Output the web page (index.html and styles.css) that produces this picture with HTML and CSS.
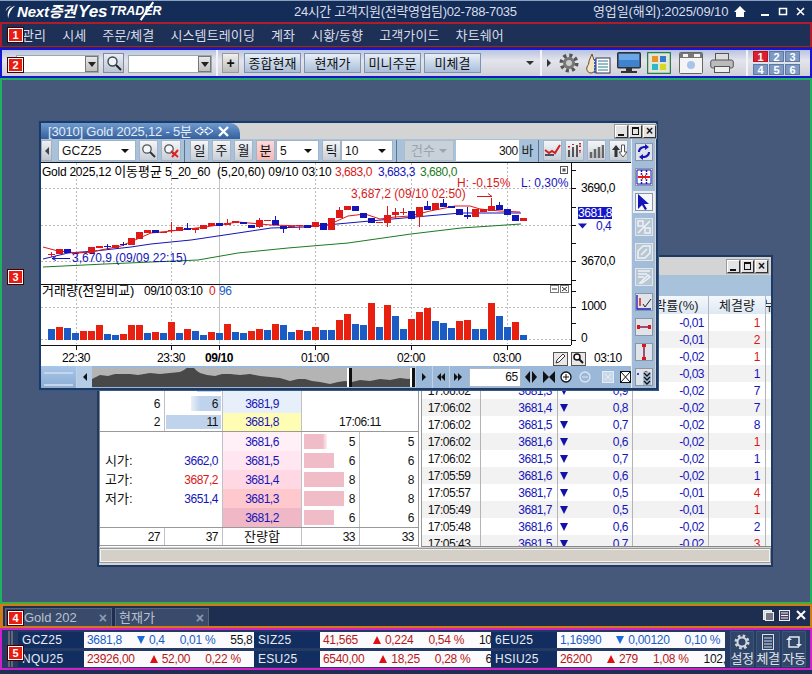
FILE: index.html
```html
<!DOCTYPE html>
<html lang="ko">
<head>
<meta charset="utf-8">
<title>Next증권 Yes TRADER</title>
<link rel="stylesheet" href="styles.css">
</head>
<body>
<div class="app">
  <header class="titlebar">
    <div class="logo">
      <svg class="swoosh" width="11" height="18" viewBox="0 0 14 18"><path d="M13 1C6 3 2 8 4 17 5 10 8 5 13 1z" fill="#fff"/><path d="M8 1C4 2 1 4 1 8 3 5 5 3 8 1z" fill="#cfd8e8"/></svg>
      <span class="logo-a">Next증권</span><span class="logo-b">Yes</span><span class="logo-c">TRADER</span>
    </div>
    <div class="title-center">24시간 고객지원(전략영업팀)02-788-7035</div>
    <div class="title-date">영업일(해외):2025/09/10</div>
    <svg class="title-icons" width="72" height="12" viewBox="0 0 72 12"><path d="M0 6 6 0l6 6h-2v5H2V6z" fill="#fff"/><path d="M27 8h8v2h-8z" fill="#fff"/><rect x="45.500" y="2.500" width="7" height="6" fill="none" stroke="#fff" stroke-width="1.500"/><path d="M63 2l7 7M70 2l-7 7" stroke="#fff" stroke-width="1.600"/></svg>
  </header>

  <nav class="menubar">
    <span>관리</span><span>시세</span><span>주문/체결</span><span>시스템트레이딩</span><span>계좌</span><span>시황/동향</span><span>고객가이드</span><span>차트쉐어</span>
  </nav>

  <div class="toolbar">
    <div class="combo combo-a"><i class="drop"></i></div>
    <button class="tb-sq"><svg width="16" height="16" viewBox="0 0 16 16"><circle cx="6.500" cy="6.500" r="4.500" fill="#eef3fa" stroke="#444" stroke-width="1.400"/><path d="M10 10l5 5" stroke="#222" stroke-width="2"/></svg></button>
    <div class="combo combo-b"><i class="drop"></i></div>
    <i class="tb-sep"></i>
    <button class="tb-plus">+</button>
    <button class="tb-btn">종합현재</button>
    <button class="tb-btn">현재가</button>
    <button class="tb-btn">미니주문</button>
    <button class="tb-btn">미체결</button>
    <i class="tb-down"></i>
    <i class="tb-sep tb-sep2"></i>
    <i class="tb-right"></i>
    <svg class="tb-ic ic-gear" width="20" height="20" viewBox="0 0 20 20"><circle cx="10" cy="10" r="7.500" fill="none" stroke="#555" stroke-width="4" stroke-dasharray="3 2.900"/><circle cx="10" cy="10" r="6" fill="#777"/><circle cx="10" cy="10" r="3" fill="#ccc"/></svg>
    <svg class="tb-ic ic-note" width="25" height="21" viewBox="0 0 25 21"><path d="M6 1l2 6c3 2 2 5 1 7 1 3-1 6-4 6s-5-3-4-6c1-2 2-3 2-6z" fill="#f2e4c8" stroke="#6b4a20"/><rect x="10" y="5" width="14" height="15" fill="#fff" stroke="#335"/><path d="M12 8h10M12 11h10M12 14h10M12 17h10" stroke="#2d7a8a"/><path d="M9 6v14" stroke="#2a5fc0" stroke-width="2" stroke-dasharray="2 1"/></svg>
    <svg class="tb-ic ic-mon" width="24" height="22" viewBox="0 0 24 22"><rect x="0.700" y="0.700" width="22.600" height="15" rx="1" fill="#3f83d0" stroke="#333" stroke-width="1.400"/><path d="M2 2h20v6H2z" fill="#6ba6e6"/><path d="M9 16h6v3H9zM4 19h16v2H4z" fill="#333"/></svg>
    <svg class="tb-ic ic-grid" width="24" height="22" viewBox="0 0 24 22"><rect x="0.500" y="0.500" width="23" height="21" rx="1" fill="#dfe8d8" stroke="#2d7a4f" stroke-width="1.500"/><rect x="5" y="4" width="6" height="6" fill="#e8932a"/><rect x="13" y="4" width="6" height="6" fill="#3a78c8"/><rect x="5" y="12" width="6" height="6" fill="#30b8c8"/><rect x="13" y="12" width="6" height="6" fill="#d8d820"/></svg>
    <svg class="tb-ic ic-cam" width="24" height="22" viewBox="0 0 24 22"><rect x="0.500" y="0.500" width="23" height="21" rx="1" fill="#f4f4f4" stroke="#666"/><path d="M1 1h22v5H1z" fill="#777"/><path d="M4 2h5v3H4zM15 2h6v3h-6z" fill="#f4f4f4"/><circle cx="12" cy="13" r="4" fill="#a8c4e8"/></svg>
    <svg class="tb-ic ic-prn" width="24" height="20" viewBox="0 0 24 20"><rect x="5.500" y="0.500" width="13" height="7" fill="#ddd" stroke="#555"/><rect x="0.700" y="7" width="22.600" height="8" rx="2" fill="#bbb" stroke="#555"/><rect x="4.500" y="13.500" width="15" height="6" fill="#eee" stroke="#555"/></svg>
    <i class="tb-sep tb-sep3"></i>
    <div class="pager">
      <span class="on">1</span><span>2</span><span>3</span><span>4</span><span>5</span><span>6</span>
    </div>
  </div>

  <main class="workspace">

    <section class="win back">
      <div class="win-title">
        <span class="wb wb-min"></span><span class="wb wb-max"></span><span class="wb wb-x"></span>
      </div>
      <div class="back-band"></div>
      <div class="back-body">
        <div class="book">
          <div class="book-head"></div>
          <div class="brow"><b></b><b class="qty"><u class="askbar" style="width:20px"></u></b><b class="px a2"></b><b class="wide"></b></div>
          <div class="brow"><b></b><b class="qty"><u class="askbar" style="width:24px"></u></b><b class="px a2"></b><b class="wide"></b></div>
          <div class="brow"><b></b><b class="qty"><u class="askbar" style="width:15px"></u></b><b class="px a2"></b><b class="wide"></b></div>
          <div class="brow"><b></b><b class="qty"><u class="askbar" style="width:24px"></u></b><b class="px a2"></b><b class="wide"></b></div>
          <div class="brow"><b class="num">6</b><b class="num qty"><u class="askbar fade" style="width:30px"></u>6</b><b class="num px a2">3681,9</b><b class="wide"></b></div>
          <div class="brow last-ask"><b class="num">2</b><b class="num qty"><u class="askbar" style="width:55px"></u>11</b><b class="num px cur">3681,8</b><b class="wide num center">17:06:11</b></div>
          <div class="brow bid"><b></b><b></b><b class="num px b1">3681,6</b><b class="num qty"><u class="bidbar fade-r" style="width:23px"></u>5</b><b class="num">5</b></div>
          <div class="brow bid"><b class="lab">시가:</b><b class="num blue">3662,0</b><b class="num px b2">3681,5</b><b class="num qty"><u class="bidbar" style="width:30px"></u>6</b><b class="num">6</b></div>
          <div class="brow bid"><b class="lab">고가:</b><b class="num red">3687,2</b><b class="num px b3">3681,4</b><b class="num qty"><u class="bidbar" style="width:40px"></u>8</b><b class="num">8</b></div>
          <div class="brow bid"><b class="lab">저가:</b><b class="num blue">3651,4</b><b class="num px b4">3681,3</b><b class="num qty"><u class="bidbar" style="width:40px"></u>8</b><b class="num">8</b></div>
          <div class="brow bid"><b></b><b></b><b class="num px b5">3681,2</b><b class="num qty"><u class="bidbar" style="width:30px"></u>6</b><b class="num">6</b></div>
          <div class="brow total"><b class="num">27</b><b class="num">37</b><b class="center">잔량합</b><b class="num">33</b><b class="num">33</b></div>
        </div>
        <div class="tape">
          <div class="thead"><b></b><b></b><b></b><b>등락률(%)</b><b>체결량</b><b>누</b></div>
          <div class="trow"><b></b><b></b><b></b><b>-0,01</b><b class="red">1</b></div>
          <div class="trow"><b></b><b></b><b></b><b>-0,01</b><b class="red">2</b></div>
          <div class="trow"><b></b><b></b><b></b><b>-0,02</b><b class="red">1</b></div>
          <div class="trow"><b></b><b></b><b></b><b>-0,03</b><b class="blue">1</b></div>
          <div class="trow"><b>17:06:02</b><b>3681,3</b><b><i class="dn"></i>0,9</b><b>-0,02</b><b class="blue">7</b></div>
          <div class="trow"><b>17:06:02</b><b>3681,4</b><b><i class="dn"></i>0,8</b><b>-0,02</b><b class="blue">7</b></div>
          <div class="trow"><b>17:06:02</b><b>3681,5</b><b><i class="dn"></i>0,7</b><b>-0,02</b><b class="blue">8</b></div>
          <div class="trow"><b>17:06:02</b><b>3681,6</b><b><i class="dn"></i>0,6</b><b>-0,02</b><b class="red">1</b></div>
          <div class="trow"><b>17:06:02</b><b>3681,5</b><b><i class="dn"></i>0,7</b><b>-0,02</b><b class="blue">1</b></div>
          <div class="trow"><b>17:05:59</b><b>3681,6</b><b><i class="dn"></i>0,6</b><b>-0,02</b><b class="blue">1</b></div>
          <div class="trow"><b>17:05:57</b><b>3681,7</b><b><i class="dn"></i>0,5</b><b>-0,01</b><b class="red">4</b></div>
          <div class="trow"><b>17:05:49</b><b>3681,7</b><b><i class="dn"></i>0,5</b><b>-0,01</b><b class="red">1</b></div>
          <div class="trow"><b>17:05:48</b><b>3681,6</b><b><i class="dn"></i>0,6</b><b>-0,02</b><b class="blue">2</b></div>
          <div class="trow"><b>17:05:43</b><b>3681,5</b><b><i class="dn"></i>0,7</b><b>-0,02</b><b class="red">3</b></div>
        </div>
      </div>
      <div class="hscroll"></div>
    </section>

    <section class="win chart">
      <div class="win-title">
        <div class="chart-tab">
          <span>[3010] Gold 2025,12 - 5분</span>
          <svg width="20" height="10" viewBox="0 0 20 10"><path d="M7 1 1 5l6 4V6.500h2v-3H7zM13 1l6 4-6 4V6.500h-2v-3h2z" fill="none" stroke="#fff"/></svg>
          <svg width="11" height="11" viewBox="0 0 11 11"><path d="M1 1l9 9M10 1l-9 9" stroke="#fff" stroke-width="2.400"/></svg>
        </div>
        <span class="wb wb-min"></span><span class="wb wb-max"></span><span class="wb wb-x"></span>
      </div>
      <div class="chart-body">
        <div class="chart-main">
          <div class="ctools">
            <button class="ct-arrow"><i class="tri-l"></i></button>
            <div class="ct-sel ct-code"><span>GCZ25</span><i class="ct-caret"></i></div>
            <button class="ct-b"><svg width="15" height="15" viewBox="0 0 15 15"><circle cx="6" cy="6" r="4.200" fill="#f4f7fb" stroke="#555" stroke-width="1.300"/><path d="M9 9l5 5" stroke="#333" stroke-width="2"/></svg></button>
            <button class="ct-b ct-w20"><svg width="16" height="15" viewBox="0 0 16 15"><circle cx="6" cy="6" r="4.200" fill="#f4f7fb" stroke="#555" stroke-width="1.300"/><path d="M9 9l2 2" stroke="#333" stroke-width="2"/><path d="M8 8l7 6M15 7l-6 7" stroke="#e02020" stroke-width="2"/></svg></button>
            <i class="ct-sep"></i>
            <button class="ct-b">일</button>
            <button class="ct-b">주</button>
            <button class="ct-b">월</button>
            <button class="ct-b ct-on">분</button>
            <div class="ct-sel ct-5"><span>5</span><i class="ct-caret"></i></div>
            <button class="ct-b ct-tick">틱</button>
            <div class="ct-sel ct-10"><span>10</span><i class="ct-caret"></i></div>
            <i class="ct-sep"></i>
            <div class="ct-dis"><span>건수</span><i class="ct-caret"></i></div>
            <div class="ct-num">300</div>
            <div class="ct-bar">바</div>
            <i class="ct-sep ct-sep-a"></i>
            <button class="ct-b"><svg width="17" height="13" viewBox="0 0 17 13"><path d="M1 6l4 3 3-2 3 2 5-8" fill="none" stroke="#d02020" stroke-width="2"/><path d="M1 11h9" stroke="#223" stroke-width="1.500"/></svg></button>
            <button class="ct-b"><svg width="15" height="15" viewBox="0 0 15 15"><path d="M2 7v7M6 4v10M10 2v12" stroke="#555" stroke-width="2"/><path d="M13 0v5M2 3v2M6 1v1M13 7v3" stroke="#d02020" stroke-width="2" stroke-dasharray="1.500 1"/></svg></button>
            <button class="ct-b"><svg width="15" height="14" viewBox="0 0 15 14"><path d="M2 8v6M6 5v9M10 3v11M14 1v13" stroke="#666" stroke-width="2.500"/></svg></button>
            <button class="ct-b"><svg width="16" height="14" viewBox="0 0 16 14"><path d="M5 1 1 6h2.500v7h3V6H9z" fill="#333"/><path d="M12 13l4-5h-2.500V1h-3v7H8z" fill="#fff" stroke="#555"/></svg></button>
          </div>

          <svg class="plot" width="590" height="203" viewBox="41 163 590 203">
            <rect x="41" y="163" width="590" height="203" fill="#fff"/>
            <g stroke="#bbb" stroke-dasharray="2 2" fill="none">
              <path d="M41 188.500H571M41 225.500H571M41 261.500H571M41 307.500H571M41 339.500H571"/>
              <path d="M76.500 163V344M171.500 163V344M315.500 163V344M411.500 163V344M507.500 163V344"/>
            </g>
            <path d="M219.500 163V344" stroke="#c4c4c4"/>
            <path d="M43 267 105 264 198 260 238 253 288 248 348 243 411 234 461 228 521 224" fill="none" stroke="#1a7a22"/>
            <path d="M43 259 68 253 95 251 131 247 151 244 191 240 238 233 271 228 305 227 348 223 381 220 415 217 461 213 521 213" fill="none" stroke="#1414b8"/>
            <path d="M43 247 58 251 78 253 91 252 121 246 135 240 151 233 171 231 205 227 238 222 271 225 305 226 328 225 348 216 365 214 380 219 395 217 410 216 430 211 455 206 470 206 480 209 500 211 520 212" fill="none" stroke="#e01818"/>
            <path d="M51.500 252v5M171.500 222v11M195.500 228v5M227.500 219v6M259.500 218v10M299.500 225v5M339.500 207v11M387.500 206v21M395.500 208v11M403.500 208v7M419.500 207v20M491.500 198v8" stroke="#e01818" fill="none"/>
            <path d="M107.500 244v5M123.500 242v4M187.500 223v5M275.500 216v4M283.500 229v4M427.500 201v5M443.500 199v4M467.500 207v12M499.500 202v3" stroke="#1414b8" fill="none"/>
            <path fill="#e01818" d="M48 254h7v1h-7zM56 249h7v5h-7zM72 253h7v1h-7zM80 252h7v1h-7zM88 247h7v6h-7zM96 246h7v2h-7zM112 245h7v3h-7zM128 238h7v7h-7zM136 232h7v7h-7zM144 230h7v3h-7zM160 232h7v1h-7zM168 230h7v1h-7zM176 227h7v4h-7zM192 228h7v2h-7zM200 225h7v4h-7zM208 223h7v3h-7zM224 223h7v2h-7zM232 221h7v2h-7zM256 220h7v7h-7zM264 220h7v1h-7zM288 226h7v1h-7zM296 225h7v1h-7zM312 222h7v5h-7zM328 218h7v12h-7zM336 210h7v8h-7zM344 206h7v4h-7zM376 222h7v1h-7zM384 215h7v8h-7zM392 212h7v3h-7zM400 212h7v1h-7zM416 207h7v10h-7zM432 203h7v7h-7zM472 209h7v8h-7zM480 209h7v3h-7zM488 206h7v5h-7zM520 218h7v3h-7z"/>
            <path fill="#1414b8" d="M64 249h7v4h-7zM104 246h7v1h-7zM120 244h7v1h-7zM152 230h7v3h-7zM184 228h7v2h-7zM216 223h7v3h-7zM240 222h7v2h-7zM248 225h7v3h-7zM272 220h7v5h-7zM280 226h7v3h-7zM304 225h7v3h-7zM320 223h7v7h-7zM352 206h7v5h-7zM360 213h7v5h-7zM368 218h7v5h-7zM408 211h7v8h-7zM424 206h7v4h-7zM440 203h7v4h-7zM448 206h7v2h-7zM456 209h7v6h-7zM464 215h7v2h-7zM496 205h7v5h-7zM504 209h7v6h-7zM512 215h7v6h-7z"/>

            <text class="t t1" x="42" y="176">Gold 2025,12 <tspan class="h">이동평균</tspan> 5_20_60</text>
            <text class="t t0" x="217" y="176">(5,20,60) 09/10 03:10</text>
            <text class="t" x="335" y="176" fill="#d81818">3,683,0</text>
            <text class="t" x="378" y="176" fill="#1414b8">3,683,3</text>
            <text class="t" x="420" y="176" fill="#1a7a22">3,680,0</text>
            <text class="t t0" x="457" y="187" fill="#d81818">H: -0,15%</text>
            <text class="t t0" x="521" y="187" fill="#1414b8">L: 0,30%</text>
            <text class="t t0" x="351" y="198" fill="#d81818">3,687,2 (09/10 02:50)</text>
            <path d="M477 196.500h15l-4-3" fill="none" stroke="#d81818"/>
            <path d="M70 258.500H52l4-2M52 258.500l4 2" fill="none" stroke="#1414b8"/>
            <text class="t t0" x="72" y="262" fill="#1414b8">3,670,9 (09/09 22:15)</text>
            <rect x="560.500" y="166.500" width="7" height="7" fill="#fff" stroke="#555"/><rect x="562.500" y="168.500" width="3" height="3" fill="#555"/>

            <path d="M41 284.500H571M41 345.500H571M571.500 163V345" stroke="#111" fill="none"/>
            <path d="M571 170.500h5M571 188.500h5M571 207.500h5M571 225.500h5M571 243.500h5M571 261.500h5M571 280.500h5M571 291.500h5M571 307.500h5M571 323.500h5M571 340.500h5M76.500 345v5M171.500 345v5M219.500 345v5M315.500 345v5M411.500 345v5M507.500 345v5" stroke="#111" fill="none"/>
            <text class="t" x="581" y="192">3690,0</text>
            <text class="t" x="581" y="265">3670,0</text>
            <rect x="578" y="207" width="34" height="12" fill="#1414c8"/>
            <text class="t" x="578" y="217" fill="#fff">3681,8</text>
            <path d="M578 223.500h9l-4.500 5z" fill="#1414b8"/>
            <text class="t" x="596" y="230" fill="#1414b8">0,4</text>
            <text class="t" x="581" y="310">1000</text>
            <text class="t" x="581" y="342">0</text>

            <text class="t h" x="42" y="295">거래량(전일비교)</text>
            <text class="t" x="144" y="295">09/10 03:10</text>
            <text class="t" x="209" y="295" fill="#d81818">0</text>
            <text class="t" x="219" y="295" fill="#1a5fc0">96</text>
            <rect x="550.500" y="285.500" width="8" height="7" fill="#fff" stroke="#777"/><path d="M552 289h5" stroke="#333"/>
            <rect x="560.500" y="285.500" width="8" height="7" fill="#fff" stroke="#777"/><path d="M562 287l5 4M567 287l-5 4" stroke="#333"/>

            <path fill="#e8200f" d="M56 340v-13h7v13zM80 340v-9h7v9zM88 340v-9h7v9zM96 340v-15h7v15zM120 340v-6h7v6zM128 340v-15h7v15zM136 340v-15h7v15zM152 340v-8h7v8zM168 340v-18h7v18zM184 340v-11h7v11zM208 340v-8h7v8zM224 340v-16h7v16zM248 340v-9h7v9zM256 340v-11h7v11zM272 340v-16h7v16zM296 340v-10h7v10zM312 340v-13h7v13zM336 340v-20h7v20zM344 340v-26h7v26zM368 340v-37h7v37zM384 340v-35h7v35zM408 340v-21h7v21zM416 340v-28h7v28zM424 340v-32h7v32zM456 340v-19h7v19zM464 340v-20h7v20zM488 340v-37h7v37zM512 340v-18h7v18z"/>
            <path fill="#1a5cc4" d="M48 340v-11h7v11zM64 340v-12h7v12zM72 340v-7h7v7zM104 340v-6h7v6zM112 340v-5h7v5zM144 340v-7h7v7zM160 340v-7h7v7zM176 340v-7h7v7zM192 340v-9h7v9zM200 340v-5h7v5zM216 340v-7h7v7zM232 340v-8h7v8zM240 340v-7h7v7zM264 340v-10h7v10zM280 340v-15h7v15zM288 340v-8h7v8zM304 340v-9h7v9zM320 340v-10h7v10zM328 340v-10h7v10zM352 340v-16h7v16zM360 340v-15h7v15zM376 340v-13h7v13zM392 340v-24h7v24zM400 340v-11h7v11zM432 340v-19h7v19zM440 340v-17h7v17zM448 340v-12h7v12zM472 340v-11h7v11zM480 340v-11h7v11zM496 340v-24h7v24zM504 340v-13h7v13zM520 340v-5h7v5z"/>

            <text class="t tm" x="76" y="362">22:30</text>
            <text class="t tm" x="171" y="362">23:30</text>
            <text class="t tm tb" x="219" y="362">09/10</text>
            <text class="t tm" x="315" y="362">01:00</text>
            <text class="t tm" x="411" y="362">02:00</text>
            <text class="t tm" x="507" y="362">03:00</text>
            <text class="t" x="594" y="362">03:10</text>
            <rect x="553.500" y="352.500" width="14" height="13" fill="#e8e8e8" stroke="#555"/><path d="M556 363l1-3 6-6 2 2-6 6z" fill="#fff" stroke="#333"/>
            <rect x="571.500" y="352.500" width="14" height="13" fill="#e8e8e8" stroke="#555"/><circle cx="577" cy="357" r="3" fill="#fff" stroke="#111" stroke-width="1.500"/><path d="M579 359l4 4" stroke="#111" stroke-width="2"/>
          </svg>

          <div class="cnav">
            <div class="nav-grip"></div>
            <button class="nav-btn nav-l"><i class="tri-l dark"></i></button>
            <svg class="overview" width="323" height="19" viewBox="92 368 323 19"><rect x="92" y="368" width="323" height="19" fill="#b4b4b4"/><path d="M92 379 96 377 100 375 108 376 115 374 130 374 138 375 150 373 160 374 170 373 180 372 184 370 188 367 194 368 197 371 200 373 207 375 215 376 222 374 230 374 240 375 250 374 260 376 270 377 280 378 290 381 298 379 305 379 312 381 320 382 330 384 338 382 345 381 352 382 360 380 370 381 380 379 390 380 400 378 408 379 415 378V387H92z" fill="#484848"/><path d="M349 368h3v19h-3zM412 368h3v19h-3z" fill="#111"/><path d="M347 368h2v19h-2zM410 368h2v19h-2z" fill="#fff"/></svg>
            <button class="nav-btn"><i class="tri-r dark"></i></button>
            <button class="nav-btn"><i class="tri-l dark"></i><i class="tri-l dark"></i></button>
            <button class="nav-btn"><i class="tri-r dark"></i><i class="tri-r dark"></i></button>
            <div class="nav-num">65</div>
            <svg class="nav-tools" width="106" height="14" viewBox="0 0 106 14"><path d="M5 1v12L0 7zM7 1v12l5-6z" fill="#111"/><path d="M18 1v12l6-6zM30 1v12l-6-6z" fill="#111"/><circle cx="41" cy="7" r="5" fill="#fff" stroke="#111" stroke-width="1.300"/><path d="M38 7h6M41 4v6" stroke="#111"/><circle cx="60" cy="7" r="5" fill="none" stroke="#dbe6f2" stroke-width="1.300"/><path d="M57 7h6" stroke="#dbe6f2"/><rect x="77.500" y="1.500" width="11" height="11" fill="#c8d8ea" stroke="#e4ecf4"/><path d="M80 4l6 6M86 4l-6 6" stroke="#e4ecf4"/><rect x="95.500" y="1.500" width="10" height="11" fill="#fff" stroke="#111"/><path d="M96 2l9 10M105 2l-9 10" stroke="#111"/></svg>
          </div>
        </div>

        <aside class="cside">
          <button class="sb"><svg width="16" height="16" viewBox="0 0 16 16"><path d="M2 8C2 4 5 2 9 2V0l4 3-4 3V4C6 4 4 6 4 8z" fill="#1414b8"/><path d="M14 8c0 4-3 6-7 6v2l-4-3 4-3v2c3 0 5-2 5-4z" fill="#1414b8"/></svg></button>
          <button class="sb"><svg width="16" height="16" viewBox="0 0 16 16"><path d="M1 1h14v14H1z" fill="#fff" stroke="#1414b8"/><path d="M5.500 1v14M10.500 1v14" stroke="#1414b8" stroke-width="1.500" stroke-dasharray="2 1"/><path d="M2 8h12" stroke="#e01818" stroke-width="2"/><path d="M5 5l3 3-3 3M11 5 8 8l3 3" fill="none" stroke="#e01818"/></svg></button>
          <button class="sb sb-on"><svg width="13" height="16" viewBox="0 0 13 16"><path d="M1 0v15l4-4 3 5 2-1-3-5h5z" fill="#1414b8"/></svg></button>
          <button class="sb sb-off"><svg width="14" height="14" viewBox="0 0 14 14"><path d="M1 13 13 1M1 1h5v5H1zM8 8h5v5H8z" fill="none" stroke="#eef2f6" stroke-width="1.500"/></svg></button>
          <button class="sb sb-off"><svg width="14" height="14" viewBox="0 0 14 14"><path d="M1 13V6l5-5h7v7l-5 5zM4 10l6-6" fill="none" stroke="#eef2f6" stroke-width="1.500"/></svg></button>
          <button class="sb sb-off"><svg width="14" height="14" viewBox="0 0 14 14"><path d="M1 1h12M1 4h9M1 7h6M3 13l8-8 2 2-8 6z" fill="none" stroke="#eef2f6" stroke-width="1.500"/></svg></button>
          <button class="sb"><svg width="16" height="16" viewBox="0 0 16 16"><path d="M1 1v14h14" fill="none" stroke="#1414b8" stroke-width="1.300"/><path d="M4 4v8" stroke="#e01818" stroke-width="1.500"/><path d="M7 10l2 3 6-8" fill="none" stroke="#222"/></svg></button>
          <button class="sb"><svg width="16" height="8" viewBox="0 0 16 8"><path d="M2 4h12" stroke="#1414b8"/><path d="M1 2h3v4H1zM12 2h3v4h-3zM4 3.500h8v1H4z" fill="#d81818"/></svg></button>
          <button class="sb"><svg width="8" height="16" viewBox="0 0 8 16"><path d="M4 1v14" stroke="#1414b8"/><path d="M2 0h4v3H2zM2 13h4v3H2zM3.500 3h1v10h-1z" fill="#d81818"/></svg></button>
          <button class="sb"><svg width="16" height="16" viewBox="0 0 16 16"><circle cx="10" cy="4" r="2" fill="#d81818"/><circle cx="2" cy="5" r="1" fill="#1414b8"/></svg></button>
          <svg class="chev" width="8" height="13" viewBox="0 0 8 13"><path d="M1 1l3 3 3-3M1 5l3 3 3-3M1 9l3 3 3-3" fill="none" stroke="#111" stroke-width="1.300"/></svg>
        </aside>
      </div>
    </section>

  </main>

  <div class="tabs">
    <div class="tab"><span class="tab-text">Gold 202</span><span class="tab-x">×</span></div>
    <div class="tab tab2"><span class="tab-text">현재가</span><span class="tab-x">×</span></div>
    <svg class="tabs-ic" width="44" height="12" viewBox="0 0 44 12"><rect x="1.500" y="1.500" width="8" height="9" fill="#cdd" stroke="#eee"/><rect x="3.500" y="3.500" width="8" height="8" fill="#778" stroke="#eee"/><rect x="17.500" y="1.500" width="10" height="10" fill="#446" stroke="#eee"/><path d="M19 4h7M19 6.500h7M19 9h7" stroke="#eee"/><path d="M35 2l8 8M43 2l-8 8" stroke="#fff" stroke-width="2"/></svg>
  </div>

  <div class="ticker">
    <div class="grip"></div>
    <div class="quotes">
      <div class="q"><span class="q-name">GCZ25</span><div class="q-v bl"><span>3681,8</span><span class="chg"><i class="dn sky"></i>0,4</span><span>0,01 %</span><span class="ex">55,8</span></div></div>
      <div class="q"><span class="q-name">SIZ25</span><div class="q-v rd"><span>41,565</span><span class="chg"><i class="up"></i>0,224</span><span>0,54 %</span><span class="ex">10</span></div></div>
      <div class="q"><span class="q-name">6EU25</span><div class="q-v bl"><span>1,16990</span><span class="chg"><i class="dn sky"></i>0,00120</span><span>0,10 %</span></div></div>
      <div class="q"><span class="q-name">NQU25</span><div class="q-v rd"><span>23926,00</span><span class="chg"><i class="up"></i>52,00</span><span>0,22 %</span></div></div>
      <div class="q"><span class="q-name">ESU25</span><div class="q-v rd"><span>6540,00</span><span class="chg"><i class="up"></i>18,25</span><span>0,28 %</span><span class="ex">6</span></div></div>
      <div class="q"><span class="q-name">HSIU25</span><div class="q-v rd"><span>26200</span><span class="chg"><i class="up"></i>279</span><span>1,08 %</span><span class="ex">102,</span></div></div>
    </div>
    <div class="tk-btns">
      <button class="tk"><svg width="16" height="16" viewBox="0 0 16 16"><circle cx="8" cy="8" r="6" fill="none" stroke="#cfd6e0" stroke-width="3" stroke-dasharray="2.500 2.200"/><circle cx="8" cy="8" r="4.500" fill="none" stroke="#cfd6e0" stroke-width="2"/></svg>설정</button>
      <button class="tk"><svg width="16" height="16" viewBox="0 0 16 16"><rect x="2.500" y="0.500" width="11" height="15" fill="none" stroke="#d8dee8"/><path d="M4 4h8M4 7h8M4 10h8M4 13h8" stroke="#d8dee8"/></svg>체결</button>
      <button class="tk"><svg width="18" height="16" viewBox="0 0 18 16"><path d="M4 5v8h10M14 11V3H4" fill="none" stroke="#e4e8f0" stroke-width="1.500"/><path d="M1 6l3-3 3 3zM11 10l3 3 3-3z" fill="#e4e8f0"/></svg>자동</button>
    </div>
  </div>

  <span class="badge b-1">1</span>
  <span class="badge b-2">2</span>
  <span class="badge b-3">3</span>
  <span class="badge b-4">4</span>
  <span class="badge b-5">5</span>
</div>
</body>
</html>
```
FILE: styles.css
```css
* { box-sizing: border-box; }
html, body { margin: 0; padding: 0; }
body {
  width: 812px; height: 674px; overflow: hidden;
  font: 13px/1 "Liberation Sans", "Noto Sans CJK KR", sans-serif;
  color: #111; background: #1c2f54;
}
button { font: inherit; color: inherit; padding: 0; margin: 0; cursor: default; }
b { font-weight: 400; }
u { text-decoration: none; }
i { font-style: normal; display: block; }

.app { position: relative; width: 812px; height: 674px; display: flex; flex-direction: column; background: #1c2f54; }

/* title */
.titlebar { height: 22px; display: flex; align-items: center; background: #142c58; border-top: 1px solid #8ba0be; color: #d8dde8; padding-left: 5px; }
.logo { width: 289px; display: flex; align-items: center; gap: 1px; color: #fff; font-weight: 700; font-style: italic; white-space: nowrap; }
.logo-a { font-size: 15px; letter-spacing: -.2px; }
.logo-b { font-size: 17px; margin-left: 1px; }
.logo-c { font-size: 12.500px; margin-left: 1px; position: relative; }
.logo-c::after { content: ""; position: absolute; left: 36px; top: -5px; width: 1.500px; height: 22px; background: #fff; transform: rotate(35deg); }
.title-center { width: 299px; letter-spacing: -.35px; white-space: nowrap; }
.title-date { width: 141px; letter-spacing: -.1px; white-space: nowrap; }
.title-icons { flex: none; }

/* menu */
.menubar { height: 25px; border: 2px solid #b01c2c; border-bottom-width: 1px; background: #1e3056; color: #d8dce6; display: flex; align-items: center; gap: 16px; padding-left: 20px; letter-spacing: .12px; white-space: nowrap; }

/* toolbar */
.toolbar { height: 30px; margin-top: 1px; border: 2px solid #1616d0; background: linear-gradient(#b8c4e0, #e4e4ec 40%, #d0d0d8); display: flex; align-items: center; padding-left: 14px; position: relative; }
.combo { height: 18px; background: #fff; border: 1px solid #9aa; position: relative; margin-top: 1px; }
.combo-a { width: 83px; }
.combo-b { width: 84px; margin-left: 4px; }
.drop { position: absolute; right: 0; top: 0; bottom: 0; width: 13px; background: #d4d0c8 linear-gradient(#e8e8e8, #c0c0c0); border: 1px solid #777; }
.drop::after { content: ""; position: absolute; left: 2px; top: 5px; border: 4px solid transparent; border-top: 5px solid #222; border-bottom: 0; }
.tb-sq { width: 21px; height: 20px; margin-left: 4px; border: 1px solid #889; background: linear-gradient(#e8eef6, #b8c4d8); display: flex; align-items: center; justify-content: center; }
.tb-sep { width: 2px; height: 26px; background: #f4f4f8; margin-left: 4px; }
.tb-plus { width: 17px; height: 20px; margin-left: 4px; border: 1px solid #999; background: linear-gradient(#f0f0f0, #bbb); font-weight: 700; font-size: 14px; line-height: 14px; }
.tb-btn { width: 57px; height: 20px; margin-left: 3px; border: 1px solid #7f93b0; background: linear-gradient(#e8f0f8, #aabdda); white-space: nowrap; }
.tb-plus + .tb-btn { margin-left: 5px; }
.tb-down { margin-left: 45px; border: 4px solid transparent; border-top: 4px solid #333; border-bottom: 0; }
.tb-sep2 { margin-left: 6px; }
.tb-right { margin-left: 5px; border: 4px solid transparent; border-left: 4px solid #333; border-right: 0; }
.tb-ic { flex: none; }
.ic-gear { margin-left: 8px; }
.ic-note { margin-left: 7px; }
.ic-mon { margin-left: 6px; }
.ic-grid { margin-left: 6px; }
.ic-cam { margin-left: 8px; }
.ic-prn { margin-left: 7px; }
.tb-sep3 { margin-left: 12px; }
.pager { margin-left: 5px; display: grid; grid-template-columns: repeat(3, 15px); grid-auto-rows: 11px; gap: 2px 1px; }
.pager span { background: #7d9ac4; color: #fff; font-size: 11px; font-weight: 700; text-align: center; line-height: 10px; border: 1px solid #5d7aa4; }
.pager .on { background: #d82030; border-color: #c01020; }

/* workspace */
.workspace { height: 526px; border: 2px solid #1fb060; border-bottom-color: #3cb040; background: #46597b; position: relative; overflow: hidden; }
.win { position: absolute; border: 2px solid #1d3a62; background: #d4d4d4; }
.chart { left: 37px; top: 41px; width: 619px; height: 269px; box-shadow: 0 0 0 1px #39588a; }
.back { left: 95px; top: 175px; width: 676px; height: 312px; display: flex; flex-direction: column; }
.win-title { height: 16px; background: #d4d4d4; display: flex; align-items: center; justify-content: flex-end; gap: 1px; flex: none; }
.back > .win-title { height: 18px; padding-right: 3px; }
.wb { position: relative; width: 13px; height: 13px; background: #e4e4e4; border: 1px solid; border-color: #fff #333 #333 #fff; outline: 1px solid #999; outline-offset: 0; }
.wb::after { content: ""; position: absolute; }
.wb-min::after { left: 2px; right: 3px; bottom: 1px; height: 2px; background: #111; }
.wb-max::after { left: 2px; right: 2px; top: 1px; bottom: 2px; border: 1px solid #111; border-top-width: 2px; }
.wb-x::after { content: "×"; left: 0; right: 0; top: 0; text-align: center; font-size: 12px; line-height: 10px; font-weight: 700; color: #111; }
.chart-tab { margin-right: auto; width: 199px; height: 16px; border-radius: 0 10px 0 0; background: linear-gradient(#6f9bd0, #345f9c); color: #e4ecf6; display: flex; align-items: center; padding-left: 7px; gap: 4px; white-space: nowrap; }
.chart-tab span { width: 142px; letter-spacing: -.2px; }
.back-band { height: 21px; background: #a8c2dc; flex: none; }
.back-body { flex: 1; min-height: 0; display: flex; background: #fff; border-left: 1px solid #888; }
.book { width: 319px; flex: none; border-right: 1px solid #9a9aa0; overflow: hidden; font-size: 12px; }
.book-head { height: 22px; background: #e6eff8; }
.brow { height: 19px; display: grid; grid-template-columns: 65px 58px 79px 116px; }
.brow > b { display: flex; align-items: center; justify-content: flex-end; padding-right: 4px; position: relative; border-right: 1px solid #c0c0c8; }
.brow > b:last-child { border-right: 0; }
.brow.bid, .brow.total { grid-template-columns: 65px 58px 79px 58px 58px; }
.brow.bid > b:first-child { border-right: 0; }
.brow.last-ask { border-bottom: 1px solid #999; }
.brow.total { border-top: 1px solid #999; border-bottom: 1px solid #999; }
.brow .lab { justify-content: flex-start; padding-left: 5px; font-size: 13px; }
.brow .px { justify-content: center; color: #1414b8; padding-right: 0; }
.brow .center { justify-content: center; padding-right: 0; font-size: 13px; }
.brow .num.center { font-size: 12px; }
.brow .qty > u { position: absolute; top: 2px; bottom: 2px; }
.num { letter-spacing: -.5px; }
.askbar { right: 1px; background: #bfd3ec; }
.bidbar { left: 2px; background: #f0bcc8; }
.qty { z-index: 0; }
.qty u { z-index: -1; }
.fade { background: linear-gradient(90deg, #e8f0f8, #bfd3ec 30%); }
.fade-r { background: linear-gradient(90deg, #f0bcc8 80%, #fdeef2); }
.a2 { background: #e6effa; }
.cur { background: #fffcb4; }
.b1 { background: #fff0f8; }
.b2 { background: #ffe6f0; }
.b3 { background: #ffd8e4; }
.b4 { background: #ffc8cc; }
.b5 { background: #f0b8c6; }
.brow .blue, .blue { color: #1414b8; }
.brow .red, .red { color: #d81818; }

.tape { flex: 1; margin-left: 2px; overflow: hidden; border-left: 1px solid #999; border-bottom: 1px solid #888; font-size: 12px; }
.thead, .trow { display: grid; grid-template-columns: 59px 77px 75px 76px 57px 8px; }
.thead { height: 18px; background: linear-gradient(#f4f8fc, #dde8f4); font-size: 13px; }
.thead b { display: flex; align-items: center; justify-content: center; border-right: 1px solid #b0b8c4; white-space: nowrap; overflow: hidden; color: #222; }
.trow { height: 17px; letter-spacing: -.5px; }
.trow:nth-child(odd) { background: #f2f2f2; }
.trow b { display: flex; align-items: center; justify-content: flex-end; padding-right: 4px; border-right: 1px solid #b4b4b8; color: #1414b8; }
.trow b:first-child { justify-content: center; color: #111; }
.trow b:nth-child(2) { padding-right: 5px; }
.trow b:nth-child(3) { justify-content: space-between; padding-left: 2px; }
.trow b:nth-child(5) { padding-right: 5px; }
.trow b.red { color: #d81818; }
.dn { flex: none; width: 0; height: 0; border: 4.500px solid transparent; border-top: 8px solid #1212a8; border-bottom: 0; }
.dn.sky { border-top-color: #1a6ad8; }
.up { flex: none; width: 0; height: 0; border: 4.500px solid transparent; border-bottom: 8px solid #e01010; border-top: 0; }
.hscroll { height: 15px; flex: none; margin: 1px 0 2px; background: #d4d0c8; border: 2px solid #f2f2f2; outline: 1px solid #999; outline-offset: -1px; }

/* chart */
.chart-body { display: flex; height: 249px; }
.chart-main { width: 590px; display: flex; flex-direction: column; }
.ctools { height: 24px; background: #a8c2dc; display: flex; align-items: center; border-bottom: 1px solid #111; white-space: nowrap; }
.ctools > * { flex: none; }
.ct-arrow { width: 11px; height: 21px; background: linear-gradient(#eef0f4, #c0c6d0); border: 1px solid #aab; display: flex; align-items: center; justify-content: center; }
.tri-l { border: 4px solid transparent; border-right: 4px solid #444; border-left: 0; }
.tri-r { border: 4px solid transparent; border-left: 4px solid #444; border-right: 0; }
.tri-l.dark { border-right-color: #111; }
.tri-r.dark { border-left-color: #111; }
.ct-sel { height: 21px; background: #fff; border: 1px solid #9fb4c8; display: flex; align-items: center; justify-content: space-between; padding: 0 6px 0 3px; font-size: 12px; letter-spacing: .2px; }
.ct-code { width: 78px; margin-left: 6px; }
.ct-5 { width: 43px; }
.ct-10 { width: 52px; }
.ct-tick { margin-left: 5px; }
.ct-caret { border: 4px solid transparent; border-top: 4px solid #111; border-bottom: 0; }
.ct-b { width: 19px; height: 21px; margin-left: 3px; background: linear-gradient(#f4f6f8, #c8ced8); border: 1px solid #aab4c0; display: flex; align-items: center; justify-content: center; }
.ct-w20 { width: 20px; }
.ct-on { background: linear-gradient(#ffd8d8, #f4b8b8); }
.ct-on + .ct-sel { margin-left: 1px; }
.ct-sep { width: 1px; height: 22px; background: #5c7490; margin: 0 0 0 3px; }
.ct-sep + .ct-b { margin-left: 5px; }
.ct-dis { width: 50px; height: 21px; margin-left: 7px; background: #c8d0d8; border: 1px solid #b0bcc8; color: #98a4b0; display: flex; align-items: center; justify-content: space-between; padding: 0 6px; }
.ct-dis .ct-caret { border-top-color: #98a4b0; }
.ct-num { width: 63px; height: 21px; margin-left: 2px; background: #fff; display: flex; align-items: center; justify-content: flex-end; padding-right: 1px; font-size: 12px; letter-spacing: -.3px; }
.ct-bar { width: 17px; text-align: center; color: #222; }
.ct-sep-a { margin-left: 2px; }
.ct-sep-a + .ct-b { margin-left: 4px; }
.plot { display: block; flex: none; }
.t { font: 12px "Liberation Sans", "Noto Sans CJK KR", sans-serif; letter-spacing: -.45px; white-space: pre; }
.t0 { letter-spacing: 0; }
.t1 { letter-spacing: -.25px; }
.t.h, .h { font-size: 13px; letter-spacing: 0; }
.tm { text-anchor: middle; }
.tb { font-weight: 700; }
.cnav { height: 22px; background: #9cb8d8; display: flex; align-items: center; font-size: 12px; }
.nav-grip { width: 35px; height: 22px; background: linear-gradient(#a8c6e8, #8cacd4); position: relative; }
.nav-grip::before { content: ""; position: absolute; left: 3px; right: 3px; top: 6px; height: 10px; border-top: 2px solid #c4d6ec; border-bottom: 2px solid #c4d6ec; }
.nav-btn { width: 17px; height: 22px; background: #9cb8d8; border: 0; border-left: 1px solid #c0d2e6; display: flex; align-items: center; justify-content: center; }
.nav-l { width: 16px; background: #b4cce6; }
.overview { flex: none; display: block; }
.nav-num { width: 52px; height: 19px; margin-left: 3px; background: #fff; border: 1px solid #b0b8c4; display: flex; align-items: center; justify-content: flex-end; padding-right: 2px; letter-spacing: -.3px; }
.nav-tools { margin-left: 4px; flex: none; }

.cside { width: 24px; height: 249px; overflow: hidden; background: #a3bdd9; border-left: 1px solid #e8eef4; display: flex; flex-direction: column; align-items: center; gap: 7px; padding-top: 4px; position: relative; }
.sb { width: 18px; height: 18px; flex: none; background: #dfe4ea; border: 1px solid #8a96a6; display: flex; align-items: center; justify-content: center; }
.sb-on { background: #f6f8fa; box-shadow: 0 0 0 2px #e8eef4; }
.sb-off { background: #b9c6d4; border-color: #e0e6ee; }
.chev { position: absolute; right: 4px; bottom: 3px; background: #a3bdd9; }

/* tabs */
.tabs { height: 24px; border: 2px solid #d07a18; border-left-width: 3px; background: #1e2e50; display: flex; align-items: flex-end; padding-left: 2px; gap: 3px; position: relative; font-size: 13px; }
.tab { width: 107px; height: 18px; background: #3a4a6a; border: 1px solid #56647e; border-bottom: 0; color: #b8c2d0; display: flex; align-items: center; justify-content: space-between; padding: 0 4px 0 18px; }
.tab2 { width: 94px; padding-left: 3px; }
.tab-text { white-space: nowrap; }
.tab-x { color: #8f9cb0; font-size: 14px; font-weight: 700; }
.tabs-ic { position: absolute; right: 4px; top: 3px; }

/* ticker */
.ticker { height: 42px; border: 2px solid #d020c8; background: #243a62; display: flex; align-items: center; padding-left: 6px; font-size: 12px; }
.grip { width: 5px; height: 36px; border-left: 2px solid #667; border-right: 2px solid #667; }
.quotes { margin-left: 5px; display: grid; grid-template-columns: 236px 237px 234px; grid-auto-rows: 16px; row-gap: 3px; height: 35px; }
.q { display: flex; overflow: hidden; }
.q-name { width: 66px; flex: none; background: #122e60; color: #e8ecf4; display: flex; align-items: center; padding-left: 4px; letter-spacing: .3px; }
.q-v { flex: 1; min-width: 0; background: #fbfbfd; display: flex; align-items: center; gap: 15px; padding-left: 3px; white-space: nowrap; overflow: hidden; letter-spacing: -.3px; }
.q-v.bl { color: #1a5cc8; }
.q-v.rd { color: #b81818; }
.chg { display: flex; align-items: center; gap: 4px; }
.ex { color: #111; }
.tk-btns { margin-left: 5px; display: flex; gap: 2px; height: 36px; }
.tk { width: 24px; background: #2f4668; border: 1px solid #3c5478; color: #e0e4ec; font-size: 13px; letter-spacing: -.5px; display: flex; flex-direction: column; align-items: center; gap: 2px; padding-top: 2px; white-space: nowrap; overflow: visible; }

/* annotation badges */
.badge { position: absolute; width: 15px; height: 14px; background: #e81c10; border: 1px solid #fff; outline: 1px solid #400; color: #fff; font-weight: 700; font-size: 11px; line-height: 12px; text-align: center; }
.b-1 { left: 8px; top: 28px; }
.b-2 { left: 8px; top: 58px; }
.b-3 { left: 8px; top: 270px; }
.b-4 { left: 8px; top: 611px; }
.b-5 { left: 8px; top: 646px; }
```
